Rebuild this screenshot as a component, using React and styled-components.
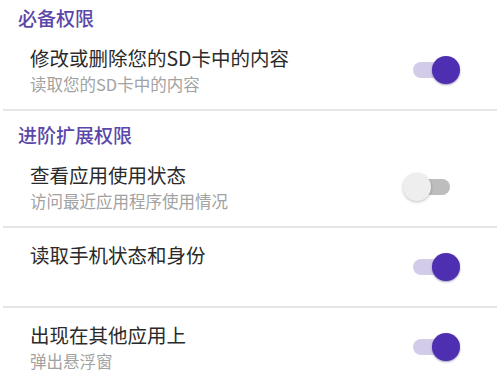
import React from "react";
import styled, { createGlobalStyle } from "styled-components";

const Global = createGlobalStyle`
  html, body { margin: 0; padding: 0; background: #ffffff; }
  body { font-family: "Noto Sans CJK SC", "Noto Sans", sans-serif; }
`;

const Page = styled.div`
  width: 500px;
  height: 380px;
  overflow: hidden;
  background: #ffffff;
  display: flex;
  flex-direction: column;
  & > * { flex-shrink: 0; }
`;

const SectionHeader = styled.div`
  padding: ${(p) => (p.$first ? "5px" : "11px")} 0 0 18px;
  font-size: 19px;
  line-height: 26px;
  font-weight: 500;
  color: #5b47a9;
`;

const Row = styled.div`
  display: flex;
  align-items: center;
  padding: 14px 40px 14px 30px;
`;

const TextBlock = styled.div`
  flex: 1;
  min-height: 50px;
  display: flex;
  flex-direction: column;
`;

const Title = styled.div`
  font-size: 19.5px;
  line-height: 26px;
  color: #2a2a2a;
`;

const Subtitle = styled.div`
  margin-top: 2px;
  font-size: 16.5px;
  line-height: 22px;
  color: #a2a2a2;
`;

const Divider = styled.div`
  height: 2px;
  margin: 0 3px;
  background: #e6e6e6;
`;

const SwitchBox = styled.div`
  position: relative;
  width: 57px;
  height: 28px;
  flex-shrink: 0;
`;

const Track = styled.div`
  position: absolute;
  left: 10px;
  top: 6px;
  width: 37px;
  height: 16px;
  border-radius: 8px;
  background: ${(p) => (p.$on ? "#d3cce9" : "#bdbdbd")};
`;

const Thumb = styled.div`
  position: absolute;
  top: 0;
  left: ${(p) => (p.$on ? "29px" : "0px")};
  width: 28px;
  height: 28px;
  border-radius: 50%;
  background: ${(p) => (p.$on ? "#4e2eb1" : "#eeeeee")};
  box-shadow: ${(p) =>
    p.$on ? "0 1px 2px rgba(40,20,110,0.45)" : "0 1px 3px rgba(0,0,0,0.25)"};
`;

const Switch = ({ on }) => (
  <SwitchBox>
    <Track $on={on} />
    <Thumb $on={on} />
  </SwitchBox>
);

const Item = ({ title, subtitle, on }) => (
  <Row>
    <TextBlock>
      <Title>{title}</Title>
      {subtitle && <Subtitle>{subtitle}</Subtitle>}
    </TextBlock>
    <Switch on={on} />
  </Row>
);

export default function App() {
  return (
    <>
      <Global />
      <Page>
        <SectionHeader $first>必备权限</SectionHeader>
        <Item title="修改或删除您的SD卡中的内容" subtitle="读取您的SD卡中的内容" on />
        <Divider />
        <SectionHeader>进阶扩展权限</SectionHeader>
        <Item title="查看应用使用状态" subtitle="访问最近应用程序使用情况" on={false} />
        <Divider />
        <Item title="读取手机状态和身份" on />
        <Divider />
        <Item title="出现在其他应用上" subtitle="弹出悬浮窗" on />
      </Page>
    </>
  );
}
